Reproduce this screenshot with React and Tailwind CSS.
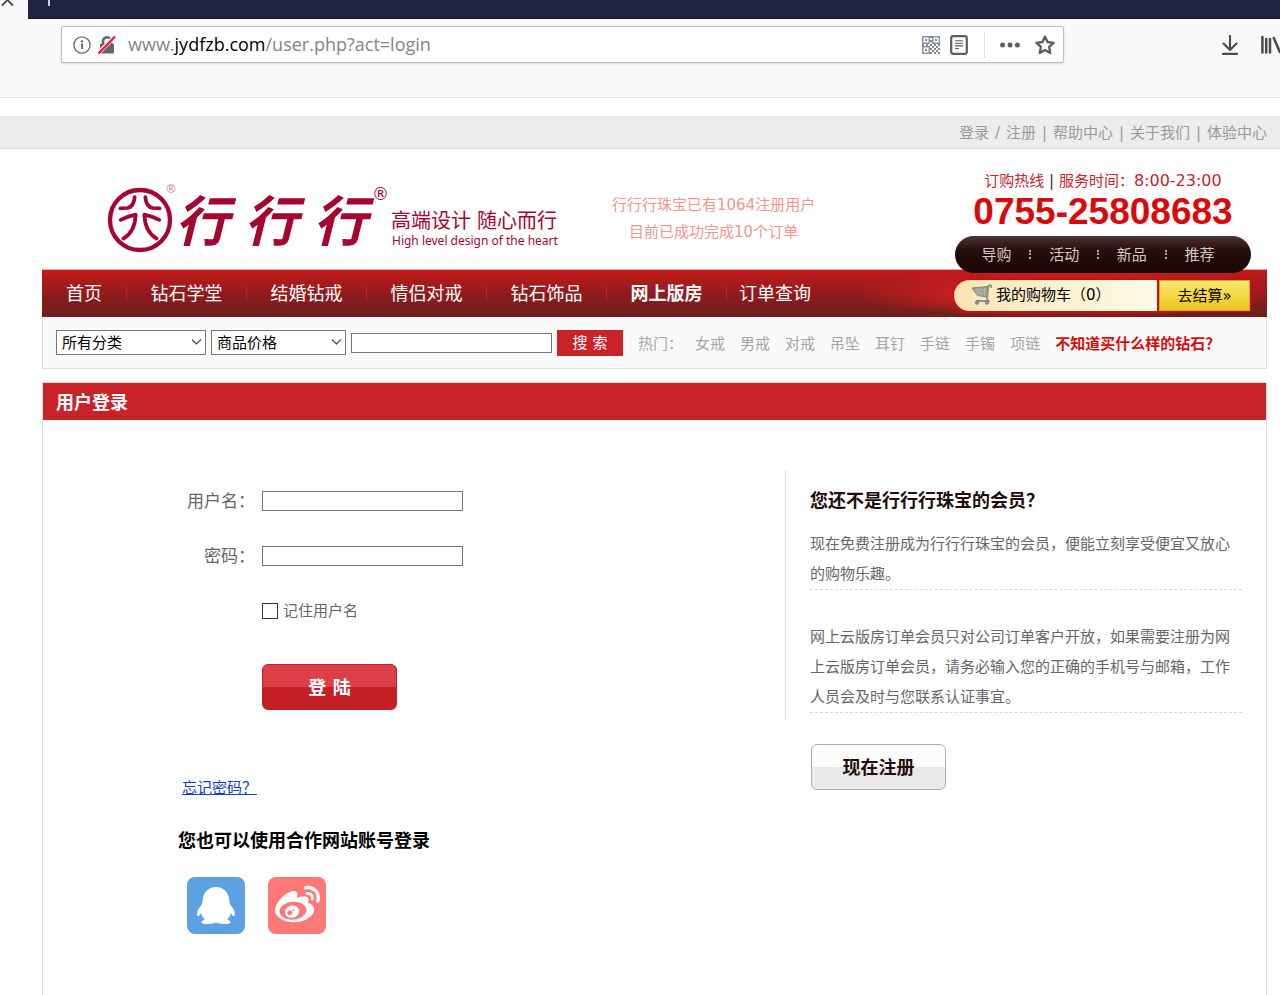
import React from "react";
import { FaWeibo } from "react-icons/fa";

const NAV = ["钻石学堂", "结婚钻戒", "情侣对戒", "钻石饰品", "网上版房"];
const HOT = ["女戒", "男戒", "对戒", "吊坠", "耳钉", "手链", "手镯", "项链"];
const QUICK = ["导购", "活动", "新品", "推荐"];
const TOP_LINKS = [
  ["登录", ""],
  ["注册", "/"],
  ["帮助中心", "|"],
  ["关于我们", "|"],
  ["体验中心", "|"],
];

function InfoIcon() {
  return (
    <svg width="18" height="18" viewBox="0 0 18 18" fill="none" stroke="#6f6f6f" aria-hidden="true">
      <circle cx="9" cy="9" r="8.1" strokeWidth="1.4" />
      <path d="M9 7.6V13" strokeWidth="2" />
      <circle cx="9" cy="5.2" r="1.2" fill="#6f6f6f" stroke="none" />
    </svg>
  );
}

function InsecureIcon() {
  return (
    <svg width="20" height="20" viewBox="0 0 20 20" fill="none" aria-hidden="true">
      <path d="M6 9V6.3a4 4 0 0 1 8 0V9" stroke="#666" strokeWidth="2.6" />
      <rect x="3" y="8.5" width="14" height="10" rx="1.5" fill="#666" />
      <path d="M1 18.5L18 1" stroke="#fff" strokeWidth="4" />
      <path d="M1.5 18.5L18 1.5" stroke="#ff0f3f" strokeWidth="2.4" />
    </svg>
  );
}

function QrIcon() {
  const cells = [];
  for (let r = 0; r < 9; r++) {
    for (let c = 0; c < 9; c++) {
      const corner = (r < 4 && c < 4) || (r < 4 && c > 4) || (r > 4 && c < 4);
      if (!corner && (r + c) % 2 === 0) cells.push(<rect key={r + "-" + c} x={c * 2} y={r * 2} width="2" height="2" />);
    }
  }
  return (
    <svg width="18" height="18" viewBox="0 0 18 18" fill="#7f8893" aria-hidden="true">
      {cells}
      <g fill="none" stroke="#8b95a5" strokeWidth="1.5">
        <rect x="0.75" y="0.75" width="6.5" height="6.5" />
        <rect x="10.75" y="0.75" width="6.5" height="6.5" />
        <rect x="0.75" y="10.75" width="6.5" height="6.5" />
      </g>
      <rect x="3" y="3" width="2" height="2" />
      <rect x="13" y="3" width="2" height="2" />
      <rect x="3" y="13" width="2" height="2" />
    </svg>
  );
}

function ReaderIcon() {
  return (
    <svg width="18" height="20" viewBox="0 0 18 20" fill="none" stroke="#5e5e5e" aria-hidden="true">
      <rect x="1.2" y="1.2" width="15.6" height="17.6" rx="2" strokeWidth="2.2" />
      <path d="M5 5.7H13M5 8.3H13M5 10.9H13M5 13.5H9" strokeWidth="1.1" />
    </svg>
  );
}

function StarIcon() {
  return (
    <svg width="20" height="20" viewBox="0 0 20 20" fill="none" stroke="#5e5e5e" strokeWidth="2.3" strokeLinejoin="round" aria-hidden="true">
      <path d="M10 1.6L12.5 7L18.6 7.8L14.1 11.9L15.3 18L10 15L4.7 18L5.9 11.9L1.4 7.8L7.5 7Z" />
    </svg>
  );
}

function DownloadIcon() {
  return (
    <svg width="20" height="20" viewBox="0 0 20 20" fill="none" stroke="#4a4a4a" strokeWidth="2.1" strokeLinecap="round" strokeLinejoin="round" aria-hidden="true">
      <path d="M10 1V14.5M3.5 8.5L10 15L16.5 8.5M3 18.9H17" />
    </svg>
  );
}

function LibraryIcon() {
  return (
    <svg width="24" height="20" viewBox="0 0 24 20" fill="none" stroke="#4a4a4a" strokeWidth="2.5" strokeLinecap="round" aria-hidden="true">
      <path d="M2.4 2V17.5M6.2 4V17.5M10 4V17.5M13.8 3L19.8 17" />
    </svg>
  );
}

function Logo() {
  return (
    <svg width="453" height="92" viewBox="107 172 453 92" fill="#a5062f" role="img" aria-label="行行行 高端设计 随心而行">
      <g transform="translate(90 170) scale(0.33333)" fill="none" stroke="#a5062f" strokeLinecap="round" strokeLinejoin="round">
        <circle cx="150" cy="150" r="90" strokeWidth="13" />
        <path strokeWidth="11" d="M91 115L112 114Q132 110 134 81M209 115L188 114Q168 110 166 81" />
        <path strokeWidth="11" d="M92 150Q115 138 137 134C136 163 128 190 100 206M208 150Q185 138 163 134C164 163 172 190 200 206" />
      </g>
      <text x="165" y="193" fontSize="12" fill="#c77a8f">®</text>
      <g fontSize="54" fontWeight="700" fontStyle="italic" fontFamily="'Noto Sans CJK SC', sans-serif">
        <text x="175" y="241">行</text>
        <text x="244" y="241">行</text>
        <text x="313" y="241">行</text>
      </g>
      <text x="372" y="200" fontSize="17">®</text>
      <text x="391" y="228" fontSize="20" fontFamily="'Noto Sans CJK SC', sans-serif">高端设计</text>
      <text x="477" y="228" fontSize="20" fontFamily="'Noto Sans CJK SC', sans-serif">随心而行</text>
      <text x="392" y="245" fontSize="12" fontFamily="'Noto Sans', sans-serif">High level design of the heart</text>
    </svg>
  );
}

function CartIcon() {
  return (
    <svg width="22" height="22" viewBox="0 0 22 22" fill="none" aria-hidden="true">
      <path d="M1 4L17.5 2.5L16 13L6.5 11.5Z" fill="#9a9a96" stroke="#85857f" strokeWidth="1" />
      <path d="M3 6.5L17 6M4.5 9.2L16.5 9M7 4V12M10 4V12M13.5 4V12" stroke="#b9b9b4" strokeWidth="0.8" />
      <path d="M17 3.5L16 14.5L17.5 17H5" stroke="#8c8c88" strokeWidth="1.8" />
      <path d="M16 3.4Q17.5 0.8 20 1.6V4" stroke="#6f9a5c" strokeWidth="1.6" />
      <circle cx="6" cy="18.6" r="1.6" fill="#9a9a96" stroke="#777" />
      <circle cx="16" cy="18.6" r="1.6" fill="#9a9a96" stroke="#777" />
    </svg>
  );
}

function QqIcon() {
  return (
    <svg width="58" height="57" viewBox="0 0 58 57" fill="#fff" aria-hidden="true">
      <path d="M29 10C36.5 10 42 15.5 42.3 23.5L42.8 27C45.5 30.5 47.9 33.5 47.9 37C47.9 39 46.8 39.6 45.7 38.4L43.8 36.2C43 39 41.8 41 40.2 42.4C42.4 43.3 43.6 44.4 43.4 45.4C43 47.6 33 47.6 29 45.6C25 47.6 15 47.6 14.5 45.4C14.3 44.4 15.6 43.3 17.8 42.4C16.2 41 15 39 14.2 36.2L12.2 38.4C11 39.6 10 39 10 37C10 33.5 12.4 30.5 15.1 27L15.6 23.5C15.9 15.5 21.5 10 29 10Z" />
    </svg>
  );
}

function Chevron() {
  return (
    <svg className="pointer-events-none absolute right-1 top-2" width="11" height="8" viewBox="0 0 11 8" fill="none" stroke="#444" strokeWidth="1.1" aria-hidden="true">
      <path d="M1 1.5L5.5 6L10 1.5" />
    </svg>
  );
}

function SelectBox({ label, width }) {
  return (
    <div className={"relative " + width}>
      <select aria-label={label} className="block h-[25px] w-full appearance-none border border-[#767676] bg-white pl-[5px] pt-0.5 text-[15px] leading-[21px] text-black">
        <option>{label}</option>
      </select>
      <Chevron />
    </div>
  );
}

function BrowserBar() {
  return (
    <div className="bg-[#f9f9f9]">
      <div className="flex h-[19px]">
        <button aria-label="关闭标签页" className="w-7 overflow-hidden">
          <svg width="28" height="19" viewBox="0 0 28 19" stroke="#4a4a4a" strokeWidth="1.8" aria-hidden="true">
            <path d="M2 5.5L13 -5.5M13 5.5L2 -5.5" />
          </svg>
        </button>
        <div className="flex-1 border-b border-[#14163a] bg-[#202340]">
          <button aria-label="新标签页" className="block">
            <svg width="42" height="18" viewBox="0 0 42 18" stroke="#cfcfdb" strokeWidth="2" aria-hidden="true">
              <path d="M21 -7V6" />
            </svg>
          </button>
        </div>
      </div>
      <div className="flex h-[79px] items-start border-b border-[#dedede] pl-[61px] pt-[7px]">
        <div className="flex h-[37px] flex-1 items-center rounded-xs border border-[#bdbdbd] bg-white px-[10px] shadow-sm">
          <button aria-label="网站信息" className="ml-px"><InfoIcon /></button>
          <button aria-label="连接不安全" className="ml-[6px]"><InsecureIcon /></button>
          <span className="ml-[11px] flex-1 font-['Open_Sans','Noto_Sans',sans-serif] text-[18px] text-[#858585]">
            www.<span className="text-black">jydfzb.com</span>/user.php?act=login
          </span>
          <button aria-label="二维码"><QrIcon /></button>
          <button aria-label="阅读模式" className="ml-[10px]"><ReaderIcon /></button>
          <span className="ml-4 h-[26px] w-px bg-[#dedede]" />
          <button aria-label="页面操作" className="ml-[15px]">
            <svg width="20" height="6" viewBox="0 0 20 6" fill="#5e5e5e" aria-hidden="true">
              <circle cx="2.6" cy="3" r="2.5" /><circle cx="10" cy="3" r="2.5" /><circle cx="17.4" cy="3" r="2.5" />
            </svg>
          </button>
          <button aria-label="收藏" className="ml-[15px] -mr-0.5"><StarIcon /></button>
        </div>
        <div className="flex h-[37px] w-[216px] items-center gap-5 overflow-hidden pl-[156px]">
          <button aria-label="下载" className="shrink-0"><DownloadIcon /></button>
          <button aria-label="书库" className="shrink-0"><LibraryIcon /></button>
        </div>
      </div>
    </div>
  );
}

function Header() {
  return (
    <header className="flex">
      <a href="#home" className="ml-[65px] mt-[23px]"><Logo /></a>
      <p className="ml-[52px] mr-auto mt-[43px] text-center leading-[27px] text-[#f5958d]">
        行行行珠宝已有1064注册用户<br />目前已成功完成10个订单
      </p>
      <div className="relative z-10 mr-4 -mb-1 w-[296px] pt-5 text-center">
        <p className="leading-6 text-[#c9252c]">
          订购热线 <span className="text-[#333]">|</span> 服务时间：<span className="text-[16px]">8:00-23:00</span>
        </p>
        <p className="font-['Liberation_Sans',sans-serif] text-[37px] font-bold leading-[38px] text-[#d90a0c]">0755-25808683</p>
        <nav className="mt-[5px] flex h-[37px] items-center justify-between rounded-full bg-linear-to-b from-[#4b3432] via-[#260c0c] via-40% to-[#1c0606] pl-[26px] pr-9 text-[#d2c8c6]">
          {QUICK.map((q, i) => (
            <React.Fragment key={q}>
              {i > 0 && <span className="h-[9px] border-l-2 border-dotted border-[#b5a5a3]" />}
              <a href="#quick" className="w-[31px] whitespace-nowrap leading-[38px]">{q}</a>
            </React.Fragment>
          ))}
        </nav>
      </div>
    </header>
  );
}

function MainNav() {
  return (
    <div className="flex h-12 items-center justify-between border-t border-[#e3a3a3] bg-linear-to-b from-[#c41a19] via-[#8c1b1d] via-55% to-[#6c1f1e]">
      <nav className="flex text-[18px] text-white">
        <a href="#home" className="w-[84px] text-center leading-[47px]">首页</a>
        {NAV.map((n) => (
          <React.Fragment key={n}>
            <span className="h-[15px] w-px self-center bg-[#c2201f]" />
            <a href="#nav" className={n === "网上版房" ? "w-[119px] text-center font-bold leading-[47px]" : "w-[119px] text-center leading-[47px]"}>{n}</a>
          </React.Fragment>
        ))}
        <span className="h-[15px] w-px self-center bg-[#c2201f]" />
        <a href="#nav" className="pl-3 leading-[47px]">订单查询</a>
      </nav>
      <div className="flex h-full w-[404px] items-center justify-end bg-radial from-[#d2201e] from-30% to-transparent to-75% pr-[17px] pt-[3px]">
        <a href="#cart" className="flex h-[31px] w-[203px] items-center gap-[3px] rounded-l-full bg-linear-to-r from-[#fbe3b4] via-[#fdf1cd] to-[#fffbe6] pl-[17px] leading-[33px] text-black shadow-[0_0_2px_2px_#cc1010]">
          <CartIcon /><span>我的购物车（0）</span>
        </a>
        <a href="#checkout" className="ml-[2px] h-[31px] w-[91px] border border-[#d9a52a] bg-linear-to-b from-[#f8e873] via-[#f4d93d] to-[#e9c41e] text-center leading-[31px] text-black shadow-[0_0_1px_1px_#cc1010]">
          去结算»
        </a>
      </div>
    </div>
  );
}

function SearchBar() {
  return (
    <form className="flex h-[52px] items-center border border-t-0 border-[#dcdcdc] bg-[#fafafa] pl-[13px]">
      <div className="flex items-center gap-[5px]">
        <SelectBox label="所有分类" width="w-[150px]" />
        <SelectBox label="商品价格" width="w-[135px]" />
        <input aria-label="搜索商品" className="h-5 w-[201px] border border-[#767676] bg-white px-1" />
        <button type="button" className="h-[26px] w-[66px] bg-[#c92329] leading-[26px] text-white">搜 索</button>
      </div>
      <div className="ml-[15px] flex pt-[3px] text-[#a5a5a5]">
        <span>热门：</span>
        <div className="ml-3 flex gap-[15px]">
          {HOT.map((h) => <a key={h} href="#hot">{h}</a>)}
          <a href="#guide" className="font-bold text-[#d90a0c]">不知道买什么样的钻石？</a>
        </div>
      </div>
    </form>
  );
}

function LoginForm() {
  return (
    <form className="flex-1 pt-[66px]">
      <div className="flex h-[30px] items-center">
        <label htmlFor="user" className="w-[212px] text-right text-[17px] leading-[28px]">用户名：</label>
        <input id="user" className="ml-[7px] h-5 w-[201px] border border-[#767676] bg-white px-1" />
      </div>
      <div className="mt-[25px] flex h-[30px] items-center">
        <label htmlFor="pass" className="w-[212px] text-right text-[17px] leading-[28px]">密码：</label>
        <input id="pass" type="password" className="ml-[7px] h-5 w-[201px] border border-[#767676] bg-white px-1" />
      </div>
      <div className="ml-[219px] mt-[25px] flex h-[30px] items-center gap-[5px]">
        <input id="remember" type="checkbox" className="size-4 appearance-none border border-[#333] bg-white checked:bg-[#c92329]" />
        <label htmlFor="remember">记住用户名</label>
      </div>
      <button type="button" className="ml-[219px] mt-[38px] block h-[46px] w-[135px] rounded-md border border-[#c41f26] bg-linear-to-b from-[#dc3f47] from-50% to-[#c41f26] to-50% text-[18px] font-bold text-white">
        登 陆
      </button>
      <a href="#forgot" className="ml-[139px] mt-[66px] inline-block leading-6 text-[#0f40cf] underline">忘记密码？</a>
      <h2 className="ml-[135px] mt-[27px] text-[18px] font-bold leading-[28px] text-black">您也可以使用合作网站账号登录</h2>
      <div className="ml-36 mt-[22px] flex gap-[23px]">
        <a href="#qq" aria-label="QQ" className="h-[57px] w-[58px] rounded-lg bg-[#5ba2e1]"><QqIcon /></a>
        <a href="#weibo" aria-label="微博" className="flex h-[57px] w-[58px] items-center justify-center rounded-lg bg-[#ff7878]">
          <FaWeibo size={45} color="#fff" />
        </a>
      </div>
    </form>
  );
}

function RegisterInfo() {
  return (
    <section className="w-[481px] pt-[50px]">
      <div className="h-[250px] border-l border-[#d8d8d8] pl-6 pr-6 pt-4">
        <h2 className="text-[18px] font-bold leading-[30px] text-[#240c0c]">您还不是行行行珠宝的会员？</h2>
        <p className="mt-[13px] border-b border-dashed border-[#d8d8d8] leading-[30px]">现在免费注册成为行行行珠宝的会员，便能立刻享受便宜又放心的购物乐趣。</p>
        <p className="mt-8 border-b border-dashed border-[#d8d8d8] leading-[30px]">网上云版房订单会员只对公司订单客户开放，如果需要注册为网上云版房订单会员，请务必输入您的正确的手机号与邮箱，工作人员会及时与您联系认证事宜。</p>
      </div>
      <button type="button" className="ml-[26px] mt-6 block h-[46px] w-[135px] rounded-md border border-[#b0b0b0] bg-linear-to-b from-[#fcfcfc] from-50% to-[#e9e9e9] to-50% text-[18px] font-bold text-[#240c0c]">
        现在注册
      </button>
    </section>
  );
}

export default function App() {
  return (
    <div className="flex min-h-screen flex-col bg-white font-['DejaVu_Sans','Noto_Sans_CJK_SC',sans-serif] text-[15px] text-[#666]">
      <BrowserBar />
      <div className="mt-[18px] flex h-[33px] justify-end border-b border-[#dcdcdc] bg-[#ededed] pr-[13px] leading-[34px] text-[#999]">
        {TOP_LINKS.map(([label, separator]) => (
          <React.Fragment key={label}>
            {separator && <span className="w-[17px] text-center">{separator}</span>}
            <a href="#top">{label}</a>
          </React.Fragment>
        ))}
      </div>
      <div className="flex flex-1 flex-col pl-[42px] pr-[13px]">
        <Header />
        <MainNav />
        <SearchBar />
        <main className="mt-[13px] flex flex-1 flex-col border border-b-0 border-[#dcdcdc]">
          <h1 className="h-[37px] bg-[#c92329] pl-[13px] text-[18px] font-bold leading-[39px] text-white">用户登录</h1>
          <div className="flex">
            <LoginForm />
            <RegisterInfo />
          </div>
        </main>
      </div>
    </div>
  );
}
